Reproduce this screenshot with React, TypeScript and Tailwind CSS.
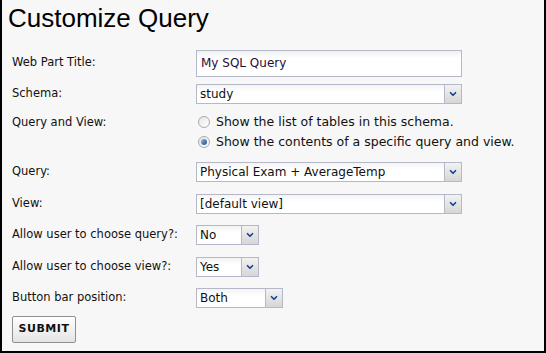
import { ChevronDown } from "lucide-react";

const font = "font-['Verdana','DejaVu_Sans',sans-serif]";

function Trigger() {
  return (
    <div className="flex w-[17px] shrink-0 items-center justify-center border-l border-[#b5b8c8] bg-gradient-to-b from-[#f2f2f2] to-[#d6d6d6]">
      <ChevronDown className="size-[10px] text-[#15428b]" strokeWidth={4} />
    </div>
  );
}

function Select({ value, width }: { value: string; width: string }) {
  return (
    <div
      className={`flex h-[20px] border border-[#b5b8c8] bg-white ${width}`}
    >
      <div className="flex flex-1 items-center bg-gradient-to-b from-[#f4f4f4] to-white to-40% pl-[3px] text-[12px] leading-none text-[#111]">
        {value}
      </div>
      <Trigger />
    </div>
  );
}

function Radio({ checked, label }: { checked?: boolean; label: string }) {
  return (
    <div className="flex h-[20px] items-center gap-[6px]">
      <span className="flex size-[12px] items-center justify-center rounded-full border border-[#a9a9a9] bg-gradient-to-br from-[#e6e6e6] to-white">
        {checked && (
          <span className="size-[6px] rounded-full bg-gradient-to-br from-[#8fb8e0] to-[#1d4f8a]" />
        )}
      </span>
      <span className="text-[12.5px] leading-none text-[#111]">{label}</span>
    </div>
  );
}

function Row({
  label,
  h,
  children,
}: {
  label: string;
  h: string;
  children: React.ReactNode;
}) {
  return (
    <div className={`flex items-center ${h}`}>
      <div className="w-[184px] shrink-0 text-[11.5px] leading-none text-[#111]">
        {label}
      </div>
      {children}
    </div>
  );
}

export default function App() {
  return (
    <div
      className={`h-[353px] w-[546px] border-2 border-t-0 border-black bg-[#f7f7f7] ${font}`}
    >
      <h1 className="h-[44px] pl-[6px] pt-[5px] font-['Liberation_Sans',Arial,sans-serif] text-[26px] leading-[26px] text-black">
        Customize Query
      </h1>
      <div className="pl-[10px]">
        <Row label="Web Part Title:" h="h-[38px]">
          <div className="flex h-[27px] w-[266px] items-center border border-[#b5b8c8] bg-gradient-to-b from-[#f0f0f0] to-white to-30% pl-[4px] text-[12px] leading-none text-[#2a0a3a]">
            My SQL Query
          </div>
        </Row>
        <Row label="Schema:" h="h-[24px]">
          <Select value="study" width="w-[266px]" />
        </Row>
        <div className="flex h-[50px] items-start pt-[6px]">
          <div className="w-[184px] shrink-0 pt-[5px] text-[11.5px] leading-none text-[#111]">
            Query and View:
          </div>
          <div className="flex flex-col pl-[2px]">
            <Radio label="Show the list of tables in this schema." />
            <Radio checked label="Show the contents of a specific query and view." />
          </div>
        </div>
        <Row label="Query:" h="h-[32px]">
          <Select value="Physical Exam + AverageTemp" width="w-[266px]" />
        </Row>
        <Row label="View:" h="h-[31px]">
          <Select value="[default view]" width="w-[266px]" />
        </Row>
        <Row label="Allow user to choose query?:" h="h-[32px]">
          <Select value="No" width="w-[63px]" />
        </Row>
        <Row label="Allow user to choose view?:" h="h-[32px]">
          <Select value="Yes" width="w-[63px]" />
        </Row>
        <Row label="Button bar position:" h="h-[30px]">
          <Select value="Both" width="w-[87px]" />
        </Row>
        <div className="flex h-[32px] items-center">
          <button
            type="button"
            className="h-[27px] w-[64px] rounded-[2px] border border-[#8f8f8f] bg-gradient-to-b from-white to-[#e4e4e4] text-[11px] font-bold tracking-[0.5px] text-[#111]"
          >
            SUBMIT
          </button>
        </div>
      </div>
    </div>
  );
}
